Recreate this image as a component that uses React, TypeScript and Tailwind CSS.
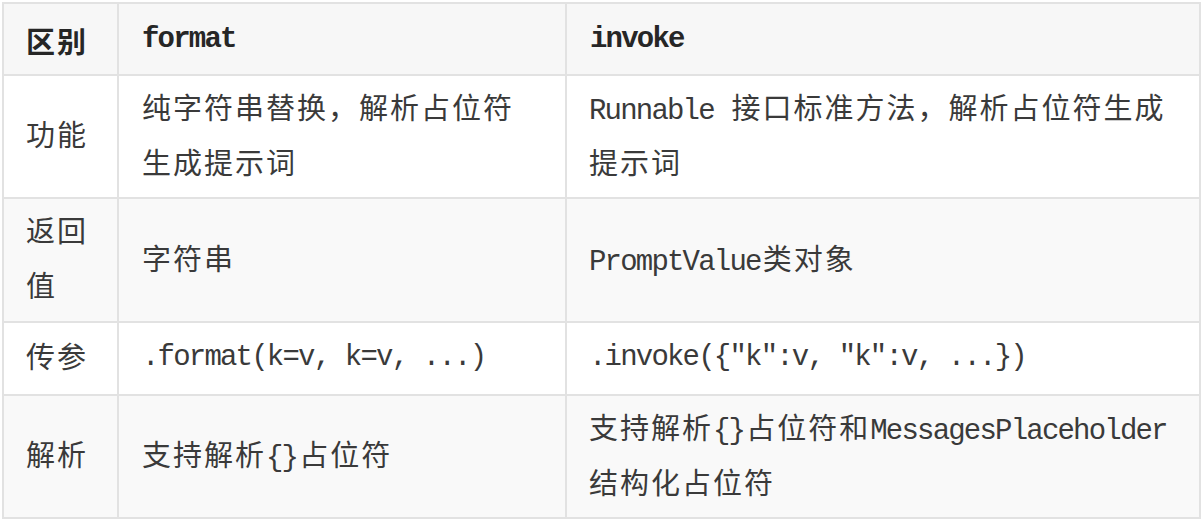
import React from "react";

const CJK = "font-['Noto_Sans_CJK_SC','Noto_Sans_CJK_JP',sans-serif] text-[29px] tracking-[2px]";
const LAT = "font-['Liberation_Mono',monospace] text-[29px] tracking-[-1.8px] mr-[2px]";
const CJK_RE = /([\u3000-\u303f\u4e00-\u9fff\uff00-\uffef]+)/;

function Mixed({ text }: { text: string }) {
  const parts = text.split(CJK_RE);
  return (
    <>
      {parts.map((p, i) =>
        p === "" ? null : CJK_RE.test(p) ? (
          <span key={i} className={CJK}>
            {p}
          </span>
        ) : (
          <span key={i} className={LAT}>
            {p}
          </span>
        )
      )}
    </>
  );
}

type Row = { label: string; a: string; b: string; gray: boolean };

const rows: Row[] = [
  {
    label: "功能",
    a: "纯字符串替换，解析占位符生成提示词",
    b: "Runnable 接口标准方法，解析占位符生成提示词",
    gray: false,
  },
  { label: "返回值", a: "字符串", b: "PromptValue类对象", gray: true },
  {
    label: "传参",
    a: ".format(k=v, k=v, ...)",
    b: '.invoke({"k":v, "k":v, ...})',
    gray: false,
  },
  {
    label: "解析",
    a: "支持解析{}占位符",
    b: "支持解析{}占位符和MessagesPlaceholder结构化占位符",
    gray: true,
  },
];

export default function App() {
  return (
    <div className="w-[1203px] h-[521px] bg-white p-[2px]">
      <div className="grid grid-cols-[113px_446px_632px] grid-rows-[70px_121px_122px_71px_121px] gap-[2px] bg-[#e2e2e2] p-[2px] w-[1199px] text-[#3a3a3a] leading-[48px]">
        <div className="bg-[#f7f7f7] flex items-center pl-[22px] pr-[20px] pt-[2px] font-bold text-[#262626]">
          <span className={CJK}>区别</span>
        </div>
        <div className="bg-[#f7f7f7] flex items-center pl-[23px] pr-[30px] pt-[2px] font-bold text-[#262626]">
          <span className={LAT}>format</span>
        </div>
        <div className="bg-[#f7f7f7] flex items-center pl-[23px] pr-[30px] pt-[2px] font-bold text-[#262626]">
          <span className={LAT}>invoke</span>
        </div>
        {rows.map((r) => (
          <React.Fragment key={r.label}>
            <div
              className={`${r.gray ? "bg-[#f9f9f9]" : "bg-white"} flex items-center pl-[22px] pr-[20px]`}
            >
              <div>
                <Mixed text={r.label} />
              </div>
            </div>
            <div
              className={`${r.gray ? "bg-[#f9f9f9]" : "bg-white"} flex items-center pl-[23px] pr-[30px]`}
            >
              <div>
                <Mixed text={r.a} />
              </div>
            </div>
            <div
              className={`${r.gray ? "bg-[#f9f9f9]" : "bg-white"} flex items-center pl-[22px] pr-[24px]`}
            >
              <div>
                <Mixed text={r.b} />
              </div>
            </div>
          </React.Fragment>
        ))}
      </div>
    </div>
  );
}
